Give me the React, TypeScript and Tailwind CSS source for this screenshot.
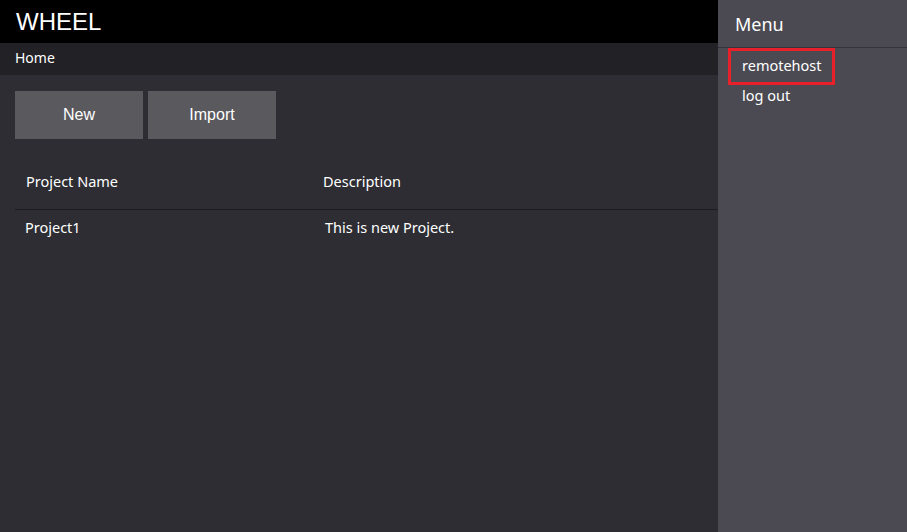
import React from "react";

export default function App() {
  const font = { fontFamily: '"Noto Sans", "Open Sans", sans-serif' };
  const arial = { fontFamily: '"Liberation Sans", Arial, sans-serif' };
  return (
    <div className="relative w-[907px] h-[532px] overflow-hidden bg-[#2e2d33] text-white" style={font}>
      <div className="h-[43px] bg-black flex items-center pl-[16px]">
        <span className="text-[24px] leading-none" style={arial}>WHEEL</span>
      </div>
      <div className="h-[32px] bg-[#222126] flex items-center pl-[15px] pb-[3px] text-[14px]">Home</div>
      <div className="px-[15px] pt-[16px]">
        <div className="flex gap-[5px]">
          <button className="w-[128px] h-[48px] bg-[#5a595e] text-[16px]" style={arial}>New</button>
          <button className="w-[128px] h-[48px] bg-[#5a595e] text-[16px]" style={arial}>Import</button>
        </div>
        <div className="mt-[22px] w-[703px]">
          <div className="flex h-[49px] items-center border-b border-[#1c1b20] text-[14.5px] pb-[6px]">
            <div className="w-[297px] pl-[11px]">Project Name</div>
            <div className="pl-[11px]">Description</div>
          </div>
          <div className="flex h-[36px] items-center text-[14.5px]">
            <div className="w-[297px] pl-[10px]">Project1</div>
            <div className="pl-[13px]">This is new Project.</div>
          </div>
        </div>
      </div>
      <div className="absolute top-0 right-0 w-[189px] h-[532px] bg-[#4b4a52]">
        <div className="h-[48px] border-b border-[#35343a] flex items-center pl-[17px] pt-[2px] text-[18px]">Menu</div>
        <div className="pl-[10px]">
          <div className="w-[107px] h-[37px] border-[3px] border-[#e8202a] flex items-center pl-[11px] pb-[2px] text-[14.5px]">remotehost</div>
          <div className="pl-[14px] text-[14.5px] leading-[20px]">log out</div>
        </div>
      </div>
    </div>
  );
}
